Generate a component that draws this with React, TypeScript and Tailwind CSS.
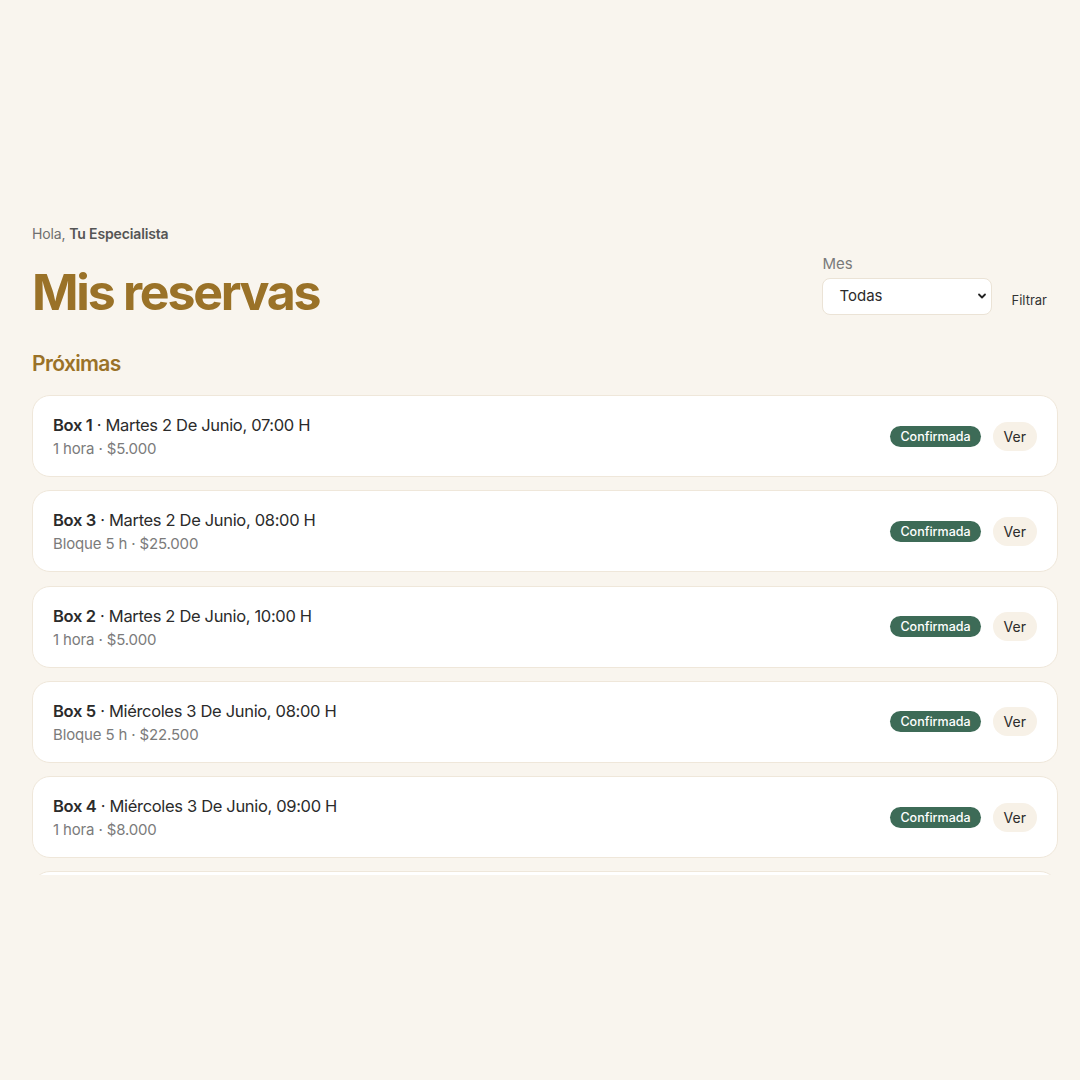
const reservas = [
  { box: "Box 1", fecha: "Martes 2 De Junio, 07:00 H", detalle: "1 hora · $5.000" },
  { box: "Box 3", fecha: "Martes 2 De Junio, 08:00 H", detalle: "Bloque 5 h · $25.000" },
  { box: "Box 2", fecha: "Martes 2 De Junio, 10:00 H", detalle: "1 hora · $5.000" },
  { box: "Box 5", fecha: "Miércoles 3 De Junio, 08:00 H", detalle: "Bloque 5 h · $22.500" },
  { box: "Box 4", fecha: "Miércoles 3 De Junio, 09:00 H", detalle: "1 hora · $8.000" },
];

function ReservaCard({ box, fecha, detalle }: { box: string; fecha: string; detalle: string }) {
  return (
    <div className="flex h-[82px] shrink-0 items-center justify-between rounded-[18px] border border-[#efe7da] bg-white px-5">
      <div className="flex flex-col">
        <p className="text-[16.5px] leading-[26px] tracking-[-0.02em] text-[#2b2b2b]">
          <span className="font-semibold">{box}</span>
          <span> · {fecha}</span>
        </p>
        <p className="text-[15px] leading-[22px] tracking-[-0.01em] text-[#7b7b7b]">{detalle}</p>
      </div>
      <div className="flex items-center gap-3">
        <span className="rounded-full bg-[#3d6b57] px-[10px] py-[2px] text-[12.5px] font-medium leading-[17px] text-white">
          Confirmada
        </span>
        <button className="rounded-full bg-[#f7f1e7] px-[11px] py-[5px] text-[14px] leading-[19px] text-[#2b2b2b]">
          Ver
        </button>
      </div>
    </div>
  );
}

export default function App() {
  return (
    <div
      className="min-h-screen bg-[#f9f5ee] pl-8 pr-[22px] pt-[224px]"
      style={{ fontFamily: "Inter, 'Liberation Sans', sans-serif" }}
    >
      <div className="flex items-start justify-between">
        <div>
          <p className="text-[14px] leading-5 tracking-[-0.01em] text-[#6f6f6f]">
            Hola, <span className="font-semibold text-[#555]">Tu Especialista</span>
          </p>
          <h1 className="mt-[18px] text-[50px] font-bold leading-[60px] tracking-[-0.045em] text-[#9a7228]">
            Mis reservas
          </h1>
        </div>
        <div className="mr-[11px] mt-[30px] flex items-end gap-[19px]">
          <div className="flex flex-col">
            <label className="text-[15px] leading-5 text-[#7a7a7a]">Mes</label>
            <div className="relative mt-[4px]">
              <select className="h-[37px] w-[170px] appearance-none rounded-lg border border-[#ebe3d6] bg-white pl-4 text-[15px] text-[#2b2b2b] outline-none">
                <option>Todas</option>
              </select>
              <svg
                className="pointer-events-none absolute right-[5px] top-[14px]"
                width="10"
                height="8"
                viewBox="0 0 10 8"
                fill="none"
              >
                <path d="M2 2.5 5 5.5 8 2.5" stroke="#222" strokeWidth="1.8" strokeLinecap="round" strokeLinejoin="round" />
              </svg>
            </div>
          </div>
          <button className="mb-[5px] text-[13px] leading-5 text-[#333]">Filtrar</button>
        </div>
      </div>

      <h2 className="mt-[28px] text-[21px] font-semibold leading-7 tracking-[-0.03em] text-[#9a7228]">Próximas</h2>

      <div className="mt-[17px] flex h-[480px] flex-col gap-[13.3px] overflow-hidden">
        {reservas.map((r, i) => (
          <ReservaCard key={i} box={r.box} fecha={r.fecha} detalle={r.detalle} />
        ))}
        {/* next card, scrolled below the fold */}
        <div className="h-[82px] shrink-0 rounded-[18px] border border-[#efe7da] bg-white" />
      </div>
    </div>
  );
}
